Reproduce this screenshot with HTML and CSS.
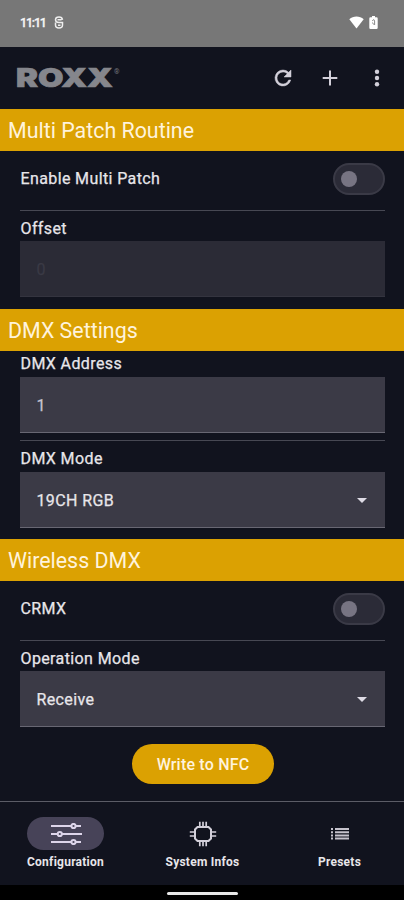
FILE: index.html
```html
<!DOCTYPE html>
<html lang="en">
<head>
  <meta charset="UTF-8" />
  <meta name="viewport" content="width=device-width, initial-scale=1.0"/>
  <title>ROXX Configuration</title>
  <link rel="stylesheet" href="styles.css">
</head>
<body>
  <div class="statusbar">
    <span class="clock">11:11</span>
    <svg class="status-app" width="10" height="13" viewBox="0 0 10 13" fill="none" stroke="#eee" stroke-width="1.5">
      <path d="M8.500 3.800C8.300 2 7 1 5 1 2.800 1 1.500 2 1.500 3.700S2.600 6.400 5 6.400h3.500V9c0 2-1.300 3-3.500 3s-3.500-1-3.500-3V6.500M3.500 3.800h4M4 9.200h2.500"/>
    </svg>
    <svg class="status-wifi" width="15" height="13" viewBox="0 0 15 13" fill="#fff">
      <path d="M7.500 12.500 0.300 3.300C2.300 1.500 4.700.6 7.500.6s5.200.9 7.200 2.700z"/>
    </svg>
    <svg class="status-battery" width="9" height="13" viewBox="0 0 9 13">
      <path d="M3 0h3v1.300h1.500Q8.700 1.300 8.700 2.500v9.300q0 1.200-1.200 1.200h-6Q.3 13 .3 11.800V2.500Q.3 1.300 1.500 1.300H3z" fill="#fff"/>
      <path d="M3.200 4.800 4.800 3.600 5.600 5v4M3.500 6.500l1 2" fill="none" stroke="#8a8a8a" stroke-width="1"/>
    </svg>
  </div>

  <header>
    <svg class="logo" width="110" height="32" viewBox="0 0 110 32">
      <text class="logo-text" x="0" y="25" textLength="97" lengthAdjust="spacingAndGlyphs">ROXX</text>
      <text class="logo-mark" x="98" y="12">®</text>
    </svg>
    <div class="actions">
      <svg width="24" height="24" viewBox="0 0 24 24" fill="#d3d0da" stroke="#d3d0da" stroke-width=".5">
        <path d="M17.650 6.350A7.960 7.960 0 0 0 12 4a8 8 0 1 0 7.730 10h-2.080A6 6 0 1 1 12 6c1.660 0 3.140.69 4.220 1.780L13 11h7V4z"/>
      </svg>
      <svg width="24" height="24" viewBox="0 0 24 24" fill="#d3d0da">
        <path d="M19.300 13H13v6.500h-2V13H4.700v-2H11V4.500h2V11h6.300z"/>
      </svg>
      <svg width="24" height="24" viewBox="0 0 24 24" fill="#d3d0da">
        <circle cx="12" cy="5.700" r="2.200"/>
        <circle cx="12" cy="12" r="2.200"/>
        <circle cx="12" cy="18.300" r="2.200"/>
      </svg>
    </div>
  </header>

  <main>
    <h2>Multi Patch Routine</h2>
    <div class="row">
      <span class="label">Enable Multi Patch</span>
      <span class="switch"></span>
    </div>
    <div class="field">
      <span class="label">Offset</span>
      <div class="box disabled">0</div>
    </div>

    <h2>DMX Settings</h2>
    <div class="field tight">
      <span class="label">DMX Address</span>
      <div class="box number">1</div>
    </div>
    <div class="field mode">
      <span class="label">DMX Mode</span>
      <div class="box">19CH RGB <span class="arrow"></span></div>
    </div>

    <h2>Wireless DMX</h2>
    <div class="row">
      <span class="label">CRMX</span>
      <span class="switch"></span>
    </div>
    <div class="field">
      <span class="label">Operation Mode</span>
      <div class="box">Receive <span class="arrow"></span></div>
    </div>

    <button class="btn">Write to NFC</button>
  </main>

  <nav>
    <a class="active">
      <span class="pill">
        <svg width="34" height="22" viewBox="0 0 34 22" fill="none" stroke="#ddd5ea" stroke-width="2">
          <path d="M2 3h20M27 3h5M2 11h6M13 11h20M2 19h20M27 19h5"/>
          <circle cx="24.500" cy="3" r="2.100"/>
          <circle cx="10.800" cy="11" r="2.100"/>
          <circle cx="24.500" cy="19" r="2.100"/>
        </svg>
      </span>
      Configuration
    </a>
    <a>
      <span class="pill">
        <svg width="28" height="26" viewBox="0 0 28 26" fill="none" stroke="#d3d0da" stroke-width="2">
          <path d="M8.500 6h11l2.500 2.500v9L19.500 20h-11L6 17.500v-9z"/>
          <path d="M10.800 5.500V.8M14 5.500V.8M17.200 5.500V.8M10.800 20.500v4.700M14 20.500v4.700M17.200 20.500v4.700M5.500 11H.8M5.500 15H.8M22.500 11h4.700M22.500 15h4.700" stroke-width="1.700"/>
        </svg>
      </span>
      System Infos
    </a>
    <a>
      <span class="pill">
        <svg width="18" height="12" viewBox="0 0 18 12" fill="#c5c2cc">
          <path d="M0 0h2v2H0zM0 3.200h2v2H0zM0 6.400h2v2H0zM0 9.600h2v2H0zM4 0h14v2H4zM4 3.200h14v2H4zM4 6.400h14v2H4zM4 9.600h14v2H4z"/>
        </svg>
      </span>
      Presets
    </a>
  </nav>
  <div class="homebar"><span></span></div>
</body>
</html>
```
FILE: styles.css
```css
* { box-sizing: border-box; }
body {
  font-family: Roboto, sans-serif;
  margin: 0;
  height: 900px;
  display: flex;
  flex-direction: column;
  background-color: #11131e;
  color: #e8e6ea;
  overflow: hidden;
}
svg { display: block; }
.statusbar {
  height: 47px;
  padding: 0 26px 2px 20px;
  display: flex;
  align-items: center;
  background: #777;
  color: #f4f4f4;
}
.clock {
  font-size: 12.5px;
  font-weight: 500;
  letter-spacing: -1.2px;
  -webkit-text-stroke: 0.3px;
}
.status-app { margin-left: 8px; }
.status-wifi { margin-left: auto; }
.status-battery { margin-left: 5px; }
header {
  height: 62px;
  padding: 0 15px 0 16px;
  display: flex;
  align-items: center;
  justify-content: space-between;
}
.logo-text {
  font-family: Inter, sans-serif;
  font-weight: 900;
  font-size: 26px;
  fill: #85868c;
  stroke: #85868c;
  stroke-width: 0.7px;
}
.logo-mark {
  font-size: 7px;
  fill: #73747c;
}
.actions {
  display: flex;
  gap: 23px;
}
main {
  height: 692px;
  display: flex;
  flex-direction: column;
}
h2 {
  flex: none;
  height: 42px;
  margin: 0;
  padding-left: 8px;
  background: #dba102;
  color: #fff3dc;
  font-size: 21.4px;
  font-weight: 400;
  line-height: 43px;
}
.row {
  height: 60px;
  margin: 0 19px 0 20px;
  padding-bottom: 3px;
  display: flex;
  align-items: center;
  justify-content: space-between;
  border-bottom: 1px solid #474853;
}
.label {
  display: block;
  padding-left: 0.5px;
  font-size: 16px;
  line-height: 20px;
  letter-spacing: 0.38px;
  -webkit-text-stroke: 0.25px;
}
.switch {
  width: 52px;
  height: 32px;
  padding: 7px;
  border: 2px solid #3a3a46;
  border-radius: 16px;
  background: #2b2b37;
}
.switch::before {
  content: "";
  display: block;
  width: 16px;
  height: 16px;
  margin: -1px 0 0 -1px;
  border-radius: 50%;
  background: #777482;
}
.field {
  margin: 0 19px 0 20px;
  padding: 8px 0 12px;
}
.field.tight {
  padding: 3px 0 7px;
  border-bottom: 1px solid #474853;
}
.field.mode { padding-bottom: 11px; }
.box {
  height: 56px;
  margin-top: 2px;
  padding: 1px 18px 0 16.500px;
  display: flex;
  align-items: center;
  justify-content: space-between;
  background: #3b3a46;
  border-bottom: 1px solid #686773;
  font-size: 16px;
  letter-spacing: 0.38px;
  -webkit-text-stroke: 0.25px;
}
.tight .box,
.mode .box {
  margin-top: 3px;
}
.box.disabled {
  background: #2b2b36;
  border-color: #34343f;
  color: #3a3a45;
}
.box.number { color: #c8c5d2; }
.arrow {
  border: 5px solid transparent;
  border-top-color: #dedbe5;
  border-bottom: 0;
}
.btn {
  width: 142px;
  height: 40px;
  margin: 5px 0 0 132px;
  padding: 0;
  border: none;
  border-radius: 20px;
  background: #dba102;
  color: #fff3dc;
  font: 500 16px Roboto, sans-serif;
  letter-spacing: 0.2px;
}
nav {
  height: 84px;
  padding: 15px 0 0 1px;
  display: flex;
  gap: 8px;
  border-top: 1px solid #5b5c66;
}
nav a {
  flex: 1;
  display: flex;
  flex-direction: column;
  align-items: center;
  font-size: 12px;
  font-weight: 700;
  line-height: 24px;
  letter-spacing: 0.25px;
}
.pill {
  width: 77px;
  height: 33px;
  border-radius: 17px;
  display: flex;
  align-items: center;
  justify-content: center;
}
.active .pill { background: #474358; }
.homebar {
  height: 15px;
  padding-top: 7px;
  background: #000;
}
.homebar span {
  display: block;
  width: 71px;
  height: 3px;
  margin: 0 auto;
  border-radius: 2px;
  background: #e8e8e8;
}
```
